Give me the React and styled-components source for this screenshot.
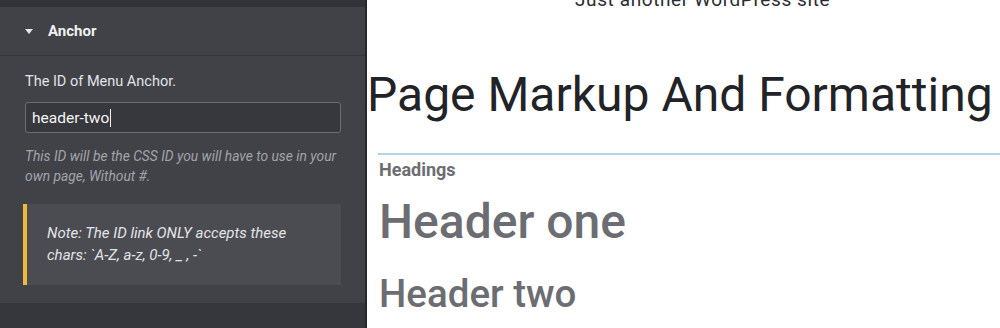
import styled, { createGlobalStyle } from "styled-components";

const Global = createGlobalStyle`
  html, body {
    margin: 0;
    padding: 0;
    background: #ffffff;
  }
  * {
    box-sizing: border-box;
  }
`;

const Screen = styled.div`
  display: flex;
  width: 1000px;
  height: 328px;
  overflow: hidden;
  font-family: Roboto, "Liberation Sans", sans-serif;
`;

const Sidebar = styled.aside`
  width: 367px;
  flex-shrink: 0;
  display: flex;
  flex-direction: column;
  background: #36373c;
  border-right: 2px solid #26272b;
`;

const TopStrip = styled.div`
  height: 7px;
  background: #323338;
`;

const SectionHead = styled.div`
  height: 49px;
  display: flex;
  align-items: center;
  gap: 15px;
  padding: 0 0 0 25px;
  background: #404248;
  border-bottom: 1px solid #37383d;
  color: #f1f1f1;
  font-size: 15px;
  font-weight: 700;
`;

const Caret = styled.span`
  width: 0;
  height: 0;
  border-left: 4.5px solid transparent;
  border-right: 4.5px solid transparent;
  border-top: 5px solid #e8e8e8;
`;

const SectionBody = styled.div`
  background: #404248;
  padding: 18px 24px 18px 25px;
  display: flex;
  flex-direction: column;
`;

const Label = styled.div`
  color: #e2e3e6;
  font-size: 14.5px;
  line-height: 16px;
`;

const Field = styled.div`
  margin-top: 12px;
  height: 31px;
  display: flex;
  align-items: center;
  padding: 0 6px;
  background: #37383d;
  border: 1px solid #6b6d73;
  border-radius: 3px;
  color: #f4f4f4;
  font-size: 15.5px;
`;

const Cursor = styled.span`
  display: inline-block;
  width: 1px;
  height: 18px;
  margin-left: 1px;
  background: #f4f4f4;
`;

const Help = styled.p`
  margin: 13px 0 0;
  color: #a2a4aa;
  font-size: 13.8px;
  font-style: italic;
  line-height: 20px;
`;

const Note = styled.div`
  margin: 18px 0 0 -2px;
  padding: 18px 20px 19px 20px;
  background: #4b4c52;
  border-left: 4px solid #f0b83c;
  color: #e3e4e7;
  font-size: 15px;
  font-style: italic;
  line-height: 22px;
`;

const Main = styled.main`
  flex: 1;
  min-width: 0;
  display: flex;
  flex-direction: column;
  background: #ffffff;
`;

const Tagline = styled.div`
  margin: -11px 0 0 208px;
  font-size: 19px;
  line-height: 22px;
  letter-spacing: 0.6px;
  color: #2a2b30;
  white-space: nowrap;
`;

const Title = styled.h1`
  margin: 56px 0 0;
  font-size: 48px;
  font-weight: 400;
  line-height: 56px;
  color: #222327;
  white-space: nowrap;
`;

const Content = styled.section`
  margin: 30px 0 0 11px;
  display: flex;
  flex-direction: column;
`;

const Rule = styled.hr`
  margin: 0;
  height: 2px;
  border: none;
  border-left: 1px solid #c7c7c7;
  background: #aed8e7;
`;

const Heading = styled.div`
  margin-top: ${(p) => p.$top}px;
  padding-left: 1px;
  font-size: ${(p) => p.$size}px;
  line-height: ${(p) => p.$lh}px;
  font-weight: ${(p) => p.$weight};
  color: #6c6d72;
  white-space: nowrap;
`;

export default function App() {
  return (
    <>
      <Global />
      <Screen>
        <Sidebar>
          <TopStrip />
          <SectionHead>
            <Caret />
            Anchor
          </SectionHead>
          <SectionBody>
            <Label>The ID of Menu Anchor.</Label>
            <Field>
              header-two
              <Cursor />
            </Field>
            <Help>
              This ID will be the CSS ID you will have to use in your own page,
              Without #.
            </Help>
            <Note>
              Note: The ID link ONLY accepts these chars: `A-Z, a-z, 0-9, _ , -`
            </Note>
          </SectionBody>
        </Sidebar>
        <Main>
          <Tagline>Just another WordPress site</Tagline>
          <Title>Page Markup And Formatting</Title>
          <Content>
            <Rule />
            <Heading $top={4} $size={18} $lh={21} $weight={700}>
              Headings
            </Heading>
            <Heading $top={14} $size={48} $lh={56} $weight={500}>
              Header one
            </Heading>
            <Heading $top={22} $size={38.5} $lh={44} $weight={500}>
              Header two
            </Heading>
          </Content>
        </Main>
      </Screen>
    </>
  );
}
